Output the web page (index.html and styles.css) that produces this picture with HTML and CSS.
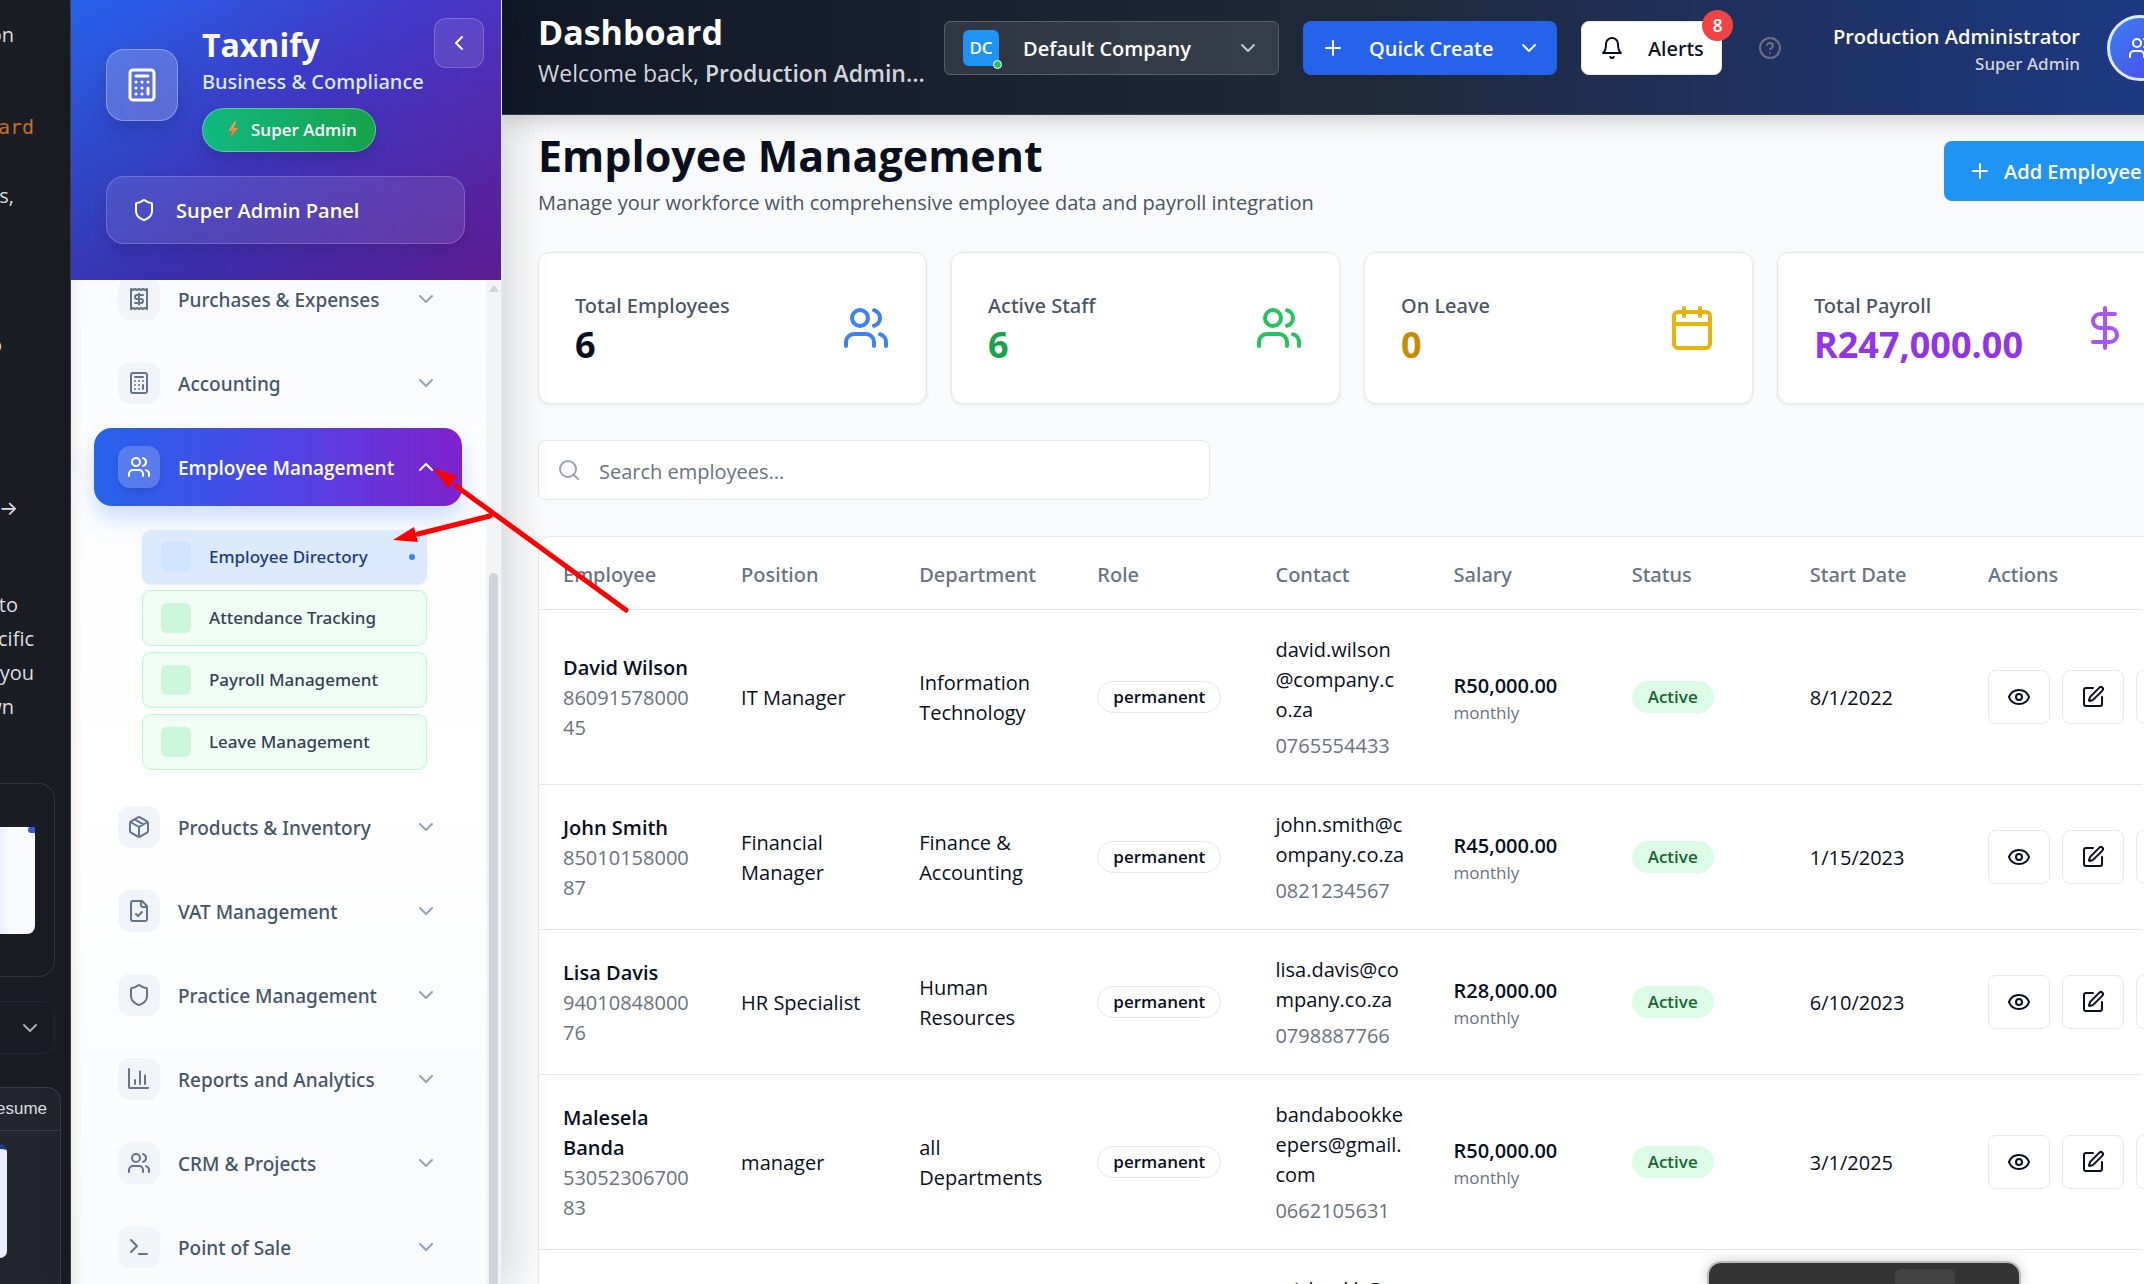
FILE: index.html
```html
<!DOCTYPE html>
<html lang="en">
<head>
<meta charset="utf-8">
<title>Taxnify - Employee Management</title>
<link rel="stylesheet" href="styles.css">
</head>
<body>
<svg class="sprite" aria-hidden="true">
  <symbol id="calculator" viewBox="0 0 24 24"><rect width="16" height="20" x="4" y="2" rx="2"/><path d="M8 6h8M16 14v4M16 10h.01M12 10h.01M8 10h.01M12 14h.01M8 14h.01M12 18h.01M8 18h.01"/></symbol>
  <symbol id="chevron-down" viewBox="0 0 24 24"><path d="m6 9 6 6 6-6"/></symbol>
  <symbol id="chevron-up" viewBox="0 0 24 24"><path d="m18 15-6-6-6 6"/></symbol>
  <symbol id="chevron-left" viewBox="0 0 24 24"><path d="m15 18-6-6 6-6"/></symbol>
  <symbol id="shield" viewBox="0 0 24 24"><path d="M20 13c0 5-3.500 7.500-7.660 8.950a1 1 0 0 1-.67-.01C7.500 20.500 4 18 4 13V6a1 1 0 0 1 1-1c2 0 4.500-1.200 6.240-2.720a1.170 1.170 0 0 1 1.520 0C14.510 3.810 17 5 19 5a1 1 0 0 1 1 1z"/></symbol>
  <symbol id="receipt" viewBox="0 0 24 24"><path d="M4 2v20l2-1 2 1 2-1 2 1 2-1 2 1 2-1 2 1V2l-2 1-2-1-2 1-2-1-2 1-2-1-2 1Z"/><path d="M16 8h-6a2 2 0 1 0 0 4h4a2 2 0 1 1 0 4H8M12 17.500v-11"/></symbol>
  <symbol id="users" viewBox="0 0 24 24"><path d="M16 21v-2a4 4 0 0 0-4-4H6a4 4 0 0 0-4 4v2"/><circle cx="9" cy="7" r="4"/><path d="M22 21v-2a4 4 0 0 0-3-3.870M16 3.130a4 4 0 0 1 0 7.750"/></symbol>
  <symbol id="package" viewBox="0 0 24 24"><path d="M11 21.730a2 2 0 0 0 2 0l7-4A2 2 0 0 0 21 16V8a2 2 0 0 0-1-1.730l-7-4a2 2 0 0 0-2 0l-7 4A2 2 0 0 0 3 8v8a2 2 0 0 0 1 1.730zM12 22V12M3.300 7 12 12l8.700-5M7.500 4.270l9 5.150"/></symbol>
  <symbol id="file-check" viewBox="0 0 24 24"><path d="M15 2H6a2 2 0 0 0-2 2v16a2 2 0 0 0 2 2h12a2 2 0 0 0 2-2V7Z"/><path d="M14 2v4a2 2 0 0 0 2 2h4M9 15l2 2 4-4"/></symbol>
  <symbol id="chart" viewBox="0 0 24 24"><path d="M2 2v18a1 1 0 0 0 1 1h18M8 17v-4M13 17V4.500M18 17V8.500"/></symbol>
  <symbol id="terminal" viewBox="0 0 24 24"><path d="m4 17 6-6-6-6M12 19h8"/></symbol>
  <symbol id="plus" viewBox="0 0 24 24"><path d="M5 12h14M12 5v14"/></symbol>
  <symbol id="bell" viewBox="0 0 24 24"><path d="M6 8a6 6 0 0 1 12 0c0 7 3 9 3 9H3s3-2 3-9M10.300 21a1.940 1.940 0 0 0 3.400 0"/></symbol>
  <symbol id="help" viewBox="0 0 24 24"><circle cx="12" cy="12" r="10"/><path d="M9.090 9a3 3 0 0 1 5.830 1c0 2-3 3-3 3M12 17h.01"/></symbol>
  <symbol id="calendar" viewBox="0 0 24 24"><path d="M8 2v4M16 2v4M3 10h18"/><rect width="18" height="18" x="3" y="4" rx="2"/></symbol>
  <symbol id="dollar" viewBox="0 0 24 24"><path d="M12 2v20M17 5H9.500a3.500 3.500 0 0 0 0 7h5a3.500 3.500 0 0 1 0 7H6"/></symbol>
  <symbol id="search" viewBox="0 0 24 24"><circle cx="11" cy="11" r="8"/><path d="m21 21-4.300-4.300"/></symbol>
  <symbol id="eye" viewBox="0 0 24 24"><path d="M2.060 12.350a1 1 0 0 1 0-.7 10.750 10.750 0 0 1 19.880 0 1 1 0 0 1 0 .7 10.750 10.750 0 0 1-19.880 0"/><circle cx="12" cy="12" r="3"/></symbol>
  <symbol id="edit" viewBox="0 0 24 24"><path d="M12 3H5a2 2 0 0 0-2 2v14a2 2 0 0 0 2 2h14a2 2 0 0 0 2-2v-7"/><path d="M18.380 2.620a1 1 0 0 1 3 3l-9.010 9.010a2 2 0 0 1-.85.510l-2.870.840a.5.5 0 0 1-.62-.62l.84-2.870a2 2 0 0 1 .510-.85z"/></symbol>
  <symbol id="trash" viewBox="0 0 24 24"><path d="M3 6h18M19 6v14a2 2 0 0 1-2 2H7a2 2 0 0 1-2-2V6M8 6V4a2 2 0 0 1 2-2h4a2 2 0 0 1 2 2v2"/></symbol>
</svg>

<div class="app">
  <aside class="chat">
    <div class="chat-text">
      <p class="line short">on</p>
      <p class="line code">ard</p>
      <p class="line short gap-m">s,</p>
      <p class="line edge">o</p>
      <p class="line mid gap-l">→</p>
      <p class="line mid gap-xl">to</p>
      <p class="line">cific</p>
      <p class="line">you</p>
      <p class="line short">wn</p>
    </div>
    <div class="chat-card"><div class="shot"><i></i></div></div>
    <div class="chat-pick"><svg class="icon"><use href="#chevron-down"/></svg></div>
    <div class="chat-panel">
      <p class="chat-head">esume</p>
      <div class="shot blue"></div>
    </div>
  </aside>

  <aside class="sidebar">
    <header class="brand">
      <div class="brand-row">
        <span class="logo"><svg class="icon big"><use href="#calculator"/></svg></span>
        <div class="brand-text">
          <strong class="brand-name">Taxnify</strong>
          <span class="brand-sub">Business &amp; Compliance</span>
          <span class="role"><svg class="bolt" viewBox="0 0 12 18"><defs><linearGradient id="boltfill" x1="0" y1="0" x2="0" y2="1"><stop offset="0" stop-color="#fbb040"/><stop offset="1" stop-color="#f4564a"/></linearGradient></defs><path fill="url(#boltfill)" d="M8 0 1 10h4l-2 8 8-11H7l2-7z"/></svg>Super Admin</span>
        </div>
        <button class="collapse" aria-label="Collapse sidebar"><svg class="icon"><use href="#chevron-left"/></svg></button>
      </div>
      <button class="panel-button"><svg class="icon"><use href="#shield"/></svg><span>Super Admin Panel</span></button>
    </header>
    <div class="nav-area">
      <nav class="nav">
        <a class="item" href="#"><span class="tile"><svg class="icon"><use href="#receipt"/></svg></span><span class="label">Purchases &amp; Expenses</span><svg class="icon chev"><use href="#chevron-down"/></svg></a>
        <a class="item" href="#"><span class="tile"><svg class="icon"><use href="#calculator"/></svg></span><span class="label">Accounting</span><svg class="icon chev"><use href="#chevron-down"/></svg></a>
        <a class="item active" href="#"><span class="tile"><svg class="icon"><use href="#users"/></svg></span><span class="label">Employee Management</span><svg class="icon chev"><use href="#chevron-up"/></svg></a>
        <div class="sub">
          <a class="sub-item current" href="#"><i></i><span>Employee Directory</span><b></b></a>
          <a class="sub-item" href="#"><i></i><span>Attendance Tracking</span></a>
          <a class="sub-item" href="#"><i></i><span>Payroll Management</span></a>
          <a class="sub-item" href="#"><i></i><span>Leave Management</span></a>
        </div>
        <a class="item" href="#"><span class="tile"><svg class="icon"><use href="#package"/></svg></span><span class="label">Products &amp; Inventory</span><svg class="icon chev"><use href="#chevron-down"/></svg></a>
        <a class="item" href="#"><span class="tile"><svg class="icon"><use href="#file-check"/></svg></span><span class="label">VAT Management</span><svg class="icon chev"><use href="#chevron-down"/></svg></a>
        <a class="item" href="#"><span class="tile"><svg class="icon"><use href="#shield"/></svg></span><span class="label">Practice Management</span><svg class="icon chev"><use href="#chevron-down"/></svg></a>
        <a class="item" href="#"><span class="tile"><svg class="icon"><use href="#chart"/></svg></span><span class="label">Reports and Analytics</span><svg class="icon chev"><use href="#chevron-down"/></svg></a>
        <a class="item" href="#"><span class="tile"><svg class="icon"><use href="#users"/></svg></span><span class="label">CRM &amp; Projects</span><svg class="icon chev"><use href="#chevron-down"/></svg></a>
        <a class="item" href="#"><span class="tile"><svg class="icon"><use href="#terminal"/></svg></span><span class="label">Point of Sale</span><svg class="icon chev"><use href="#chevron-down"/></svg></a>
      </nav>
      <div class="scroll"><span class="scroll-up"></span><span class="thumb"></span></div>
    </div>
  </aside>

  <div class="main">
    <header class="topbar">
      <div class="greeting">
        <h2>Dashboard</h2>
        <p>Welcome back, <b>Production Admin...</b></p>
      </div>
      <div class="company">
        <span class="company-badge">DC<i></i></span>
        <select aria-label="Company"><option>Default Company</option></select>
        <svg class="icon"><use href="#chevron-down"/></svg>
      </div>
      <button class="create"><svg class="icon"><use href="#plus"/></svg><span>Quick Create</span><svg class="icon"><use href="#chevron-down"/></svg></button>
      <button class="alerts"><svg class="icon"><use href="#bell"/></svg><span>Alerts</span><span class="count">8</span></button>
      <button class="help" aria-label="Help"><svg class="icon"><use href="#help"/></svg></button>
      <div class="user"><strong>Production Administrator</strong><span>Super Admin</span></div>
      <button class="avatar" aria-label="Account"><svg class="icon"><use href="#users"/></svg></button>
    </header>

    <main class="content">
      <div class="page-head">
        <div>
          <h1>Employee Management</h1>
          <p>Manage your workforce with comprehensive employee data and payroll integration</p>
        </div>
        <button class="add"><svg class="icon"><use href="#plus"/></svg><span>Add Employee</span></button>
      </div>

      <section class="stats">
        <div class="stat"><div><p>Total Employees</p><strong>6</strong></div><svg class="icon huge c-blue"><use href="#users"/></svg></div>
        <div class="stat"><div><p>Active Staff</p><strong class="t-green">6</strong></div><svg class="icon huge c-green"><use href="#users"/></svg></div>
        <div class="stat"><div><p>On Leave</p><strong class="t-yellow">0</strong></div><svg class="icon huge c-yellow"><use href="#calendar"/></svg></div>
        <div class="stat"><div><p>Total Payroll</p><strong class="t-purple">R247,000.00</strong></div><svg class="icon huge c-purple"><use href="#dollar"/></svg></div>
      </section>

      <label class="search"><svg class="icon"><use href="#search"/></svg><input type="text" placeholder="Search employees..." aria-label="Search employees"></label>

      <div class="table-card">
        <table>
          <thead><tr><th>Employee</th><th>Position</th><th>Department</th><th>Role</th><th>Contact</th><th>Salary</th><th>Status</th><th>Start Date</th><th>Actions</th></tr></thead>
          <tbody>
            <tr>
              <td><strong>David Wilson</strong><div class="muted">86091578000<br>45</div></td><td>IT Manager</td><td>Information Technology</td><td class="control"><span class="pill">permanent</span></td>
              <td><div>david.wilson<br>@company.c<br>o.za</div><div class="muted phone">0765554433</div></td>
              <td><strong>R50,000.00</strong><div class="small">monthly</div></td><td class="control"><span class="pill ok">Active</span></td><td>8/1/2022</td>
              <td class="control"><div class="actions"><button aria-label="View"><svg class="icon"><use href="#eye"/></svg></button><button aria-label="Edit"><svg class="icon"><use href="#edit"/></svg></button><button aria-label="Delete"><svg class="icon"><use href="#trash"/></svg></button></div></td>
            </tr>
            <tr>
              <td><strong>John Smith</strong><div class="muted">85010158000<br>87</div></td><td>Financial Manager</td><td>Finance &amp; Accounting</td><td class="control"><span class="pill">permanent</span></td>
              <td><div>john.smith@c<br>ompany.co.za</div><div class="muted phone">0821234567</div></td>
              <td><strong>R45,000.00</strong><div class="small">monthly</div></td><td class="control"><span class="pill ok">Active</span></td><td>1/15/2023</td>
              <td class="control"><div class="actions"><button aria-label="View"><svg class="icon"><use href="#eye"/></svg></button><button aria-label="Edit"><svg class="icon"><use href="#edit"/></svg></button><button aria-label="Delete"><svg class="icon"><use href="#trash"/></svg></button></div></td>
            </tr>
            <tr>
              <td><strong>Lisa Davis</strong><div class="muted">94010848000<br>76</div></td><td>HR Specialist</td><td>Human Resources</td><td class="control"><span class="pill">permanent</span></td>
              <td><div>lisa.davis@co<br>mpany.co.za</div><div class="muted phone">0798887766</div></td>
              <td><strong>R28,000.00</strong><div class="small">monthly</div></td><td class="control"><span class="pill ok">Active</span></td><td>6/10/2023</td>
              <td class="control"><div class="actions"><button aria-label="View"><svg class="icon"><use href="#eye"/></svg></button><button aria-label="Edit"><svg class="icon"><use href="#edit"/></svg></button><button aria-label="Delete"><svg class="icon"><use href="#trash"/></svg></button></div></td>
            </tr>
            <tr>
              <td><strong>Malesela Banda</strong><div class="muted">53052306700<br>83</div></td><td>manager</td><td>all Departments</td><td class="control"><span class="pill">permanent</span></td>
              <td><div>bandabookke<br>epers@gmail.<br>com</div><div class="muted phone">0662105631</div></td>
              <td><strong>R50,000.00</strong><div class="small">monthly</div></td><td class="control"><span class="pill ok">Active</span></td><td>3/1/2025</td>
              <td class="control"><div class="actions"><button aria-label="View"><svg class="icon"><use href="#eye"/></svg></button><button aria-label="Edit"><svg class="icon"><use href="#edit"/></svg></button><button aria-label="Delete"><svg class="icon"><use href="#trash"/></svg></button></div></td>
            </tr>
            <tr>
              <td></td><td></td><td></td><td></td>
              <td><div>michael.b@c<br>ompany.co.za</div><div class="muted phone">0731234567</div></td>
              <td></td><td></td><td></td><td></td>
            </tr>
          </tbody>
        </table>
      </div>
    </main>
  </div>
</div>

<svg class="arrows" viewBox="0 0 240 150" aria-hidden="true">
  <path class="shaft" d="M236 145 L66 21M100 51 L28 69"/>
  <path class="head" d="M43 3 67 11 58 23zM3 75 24 62 28 77z"/>
</svg>
<div class="float-bar"><i></i></div>
</body>
</html>
```

FILE: styles.css
```css
* { box-sizing: border-box; }
body {
  margin: 0;
  height: 100vh;
  overflow: hidden;
  font-family: "Open Sans", "Noto Sans", sans-serif;
  font-size: 20px;
  line-height: 30px;
  color: #0a0f1e;
  background: #f9fafb;
}
h1, h2, p { margin: 0; }
button, input, select { font: inherit; color: inherit; border: 0; margin: 0; }
button { display: flex; align-items: center; padding: 0; }
button span { padding-top: 2px; }
a { color: inherit; text-decoration: none; }
.sprite { position: absolute; width: 0; height: 0; }
.icon {
  width: 24px;
  height: 24px;
  flex: none;
  fill: none;
  stroke: currentColor;
  stroke-width: 2;
  stroke-linecap: round;
  stroke-linejoin: round;
}
.icon.big { width: 36px; height: 36px; }
.icon.huge { width: 48px; height: 48px; }

.app { display: flex; height: 100vh; overflow: hidden; }

/* chat window behind the application */
.chat {
  flex: none;
  width: 71px;
  overflow: hidden;
  background: #1a1d24;
  border-right: 1px solid #3f424c;
  color: #dcdde1;
}
.chat-text { height: 783px; padding-top: 18px; }
.line {
  display: flex;
  justify-content: flex-end;
  padding-right: 36px;
  line-height: 34px;
}
.line.short { padding-right: 56px; }
.line.mid { padding-right: 52px; }
.line.edge { padding-right: 68px; margin-top: 115px; }
.line.code {
  margin-top: 58px;
  color: #c56f1c;
  font-family: "DejaVu Sans Mono", monospace;
}
.gap-m { margin-top: 35px; }
.gap-l { margin-top: 129px; font-family: Inter, "DejaVu Sans", sans-serif; }
.gap-xl { margin-top: 63px; }
.chat-card {
  width: 55px;
  height: 194px;
  padding: 43px 19px 0 0;
  border: 1px solid #2c3836;
  border-left: 0;
  border-radius: 0 16px 16px 0;
}
.shot {
  height: 107px;
  border-radius: 0 8px 8px 0;
  background: linear-gradient(90deg, #eef0fc, #f9fafd 30%);
}
.shot i { display: block; width: 7px; height: 6px; margin-left: auto; background: #2b5ce0; border-radius: 3px 0 0 3px; }
.chat-pick {
  display: flex;
  justify-content: flex-end;
  align-items: center;
  width: 55px;
  height: 53px;
  margin: 24px 0 33px;
  padding-right: 12px;
  border: 1px solid #252833;
  border-left: 0;
  border-radius: 0 12px 12px 0;
  color: #a9abb3;
}
.chat-panel {
  width: 61px;
  height: 260px;
  background: #23262f;
  border: 1px solid #3a3d48;
  border-left: 0;
  border-radius: 0 14px 0 0;
}
.chat-head {
  display: flex;
  justify-content: flex-end;
  padding: 0 13px 0 0;
  margin-bottom: 13px;
  font-family: "Liberation Sans", sans-serif;
  font-size: 17px;
  line-height: 42px;
  border-bottom: 1px solid #3a3d48;
}
.shot.blue { width: 7px; height: 114px; background: #e9eefe; border-top: 5px solid #20398a; }

/* sidebar */
.sidebar {
  position: relative;
  z-index: 2;
  display: flex;
  flex-direction: column;
  flex: none;
  width: 431px;
  border-right: 1px solid #e2e8f0;
  box-shadow: 8px 0 40px rgba(0, 0, 0, .15);
}
.brand {
  flex: none;
  height: 280px;
  padding: 22px 36px 35px 35px;
  color: #fff;
  background:
    linear-gradient(0deg, rgba(0, 0, 0, .14), rgba(0, 0, 0, 0)),
    linear-gradient(135deg, #2563eb, #4338ca 50%, #6b21a8);
}
.brand-row { display: flex; align-items: flex-start; }
.logo {
  display: flex;
  align-items: center;
  justify-content: center;
  width: 72px;
  height: 72px;
  margin: 27px 24px 0 0;
  border: 1px solid rgba(255, 255, 255, .3);
  border-radius: 18px;
  background: rgba(255, 255, 255, .2);
  box-shadow: 0 10px 15px rgba(0, 0, 0, .1);
}
.brand-text { display: flex; flex-direction: column; align-items: flex-start; flex: 1; }
.brand-name { font-size: 32px; line-height: 45px; }
.brand-sub {
  color: #dbeafe;
  font-family: "Noto Sans", "Open Sans", sans-serif;
  font-weight: 500;
  line-height: 30px;
  white-space: nowrap;
}
.role {
  display: flex;
  align-items: center;
  gap: 12px;
  height: 44px;
  margin: 11px 0 24px;
  padding: 0 18px 0 24px;
  border: 1px solid rgba(255, 255, 255, .3);
  border-radius: 22px;
  background: linear-gradient(90deg, #10b981, #16a34a);
  box-shadow: 0 8px 14px rgba(0, 0, 0, .12);
  font-size: 17px;
  font-weight: 600;
  white-space: nowrap;
}
.bolt { width: 12px; height: 18px; }
.collapse {
  position: absolute;
  top: 18px;
  right: 17px;
  justify-content: center;
  width: 50px;
  height: 50px;
  border: 1px solid rgba(255, 255, 255, .2);
  border-radius: 12px;
  background: rgba(255, 255, 255, .1);
}
.panel-button {
  gap: 20px;
  width: 100%;
  height: 68px;
  padding: 0 25px;
  border: 1px solid rgba(255, 255, 255, .2);
  border-radius: 18px;
  background: rgba(255, 255, 255, .1);
  box-shadow: 0 8px 14px rgba(0, 0, 0, .1);
  font-weight: 600;
}
.nav-area {
  display: flex;
  flex: 1;
  overflow: hidden;
  background:
    linear-gradient(90deg, rgba(60, 20, 20, .06), rgba(0, 0, 0, 0) 12px),
    linear-gradient(180deg, #fafbfe, #fff 50%, #f8fafc);
}
.nav {
  display: flex;
  flex-direction: column;
  gap: 6px;
  flex: 1;
  min-width: 0;
  margin-top: -20px;
  padding: 0 24px 0 23px;
}
.item {
  display: flex;
  align-items: center;
  gap: 18px;
  flex: none;
  height: 78px;
  padding: 0 24px;
  border-radius: 18px;
  color: #475569;
  font-family: "Noto Sans", "Open Sans", sans-serif;
  font-size: 19px;
  font-weight: 500;
  white-space: nowrap;
}
.label { padding-top: 2px; }
.tile {
  display: flex;
  align-items: center;
  justify-content: center;
  flex: none;
  width: 42px;
  height: 42px;
  border-radius: 12px;
  background: #f1f5f9;
  color: #64748b;
}
.chev { margin-left: auto; color: #94a3b8; }
.active {
  color: #fff;
  font-family: inherit;
  font-weight: 600;
  background: linear-gradient(90deg, #2563eb, #4f46e5 50%, #7e22ce);
  box-shadow: 0 12px 22px rgba(59, 130, 246, .25);
}
.active .tile { background: rgba(255, 255, 255, .2); color: #fff; box-shadow: 0 4px 6px rgba(0, 0, 0, .1); }
.active .chev { color: #fff; }
.sub {
  display: flex;
  flex-direction: column;
  gap: 6px;
  margin: 18px 35px 12px 48px;
}
.sub-item {
  display: flex;
  align-items: center;
  gap: 18px;
  height: 56px;
  padding: 0 18px;
  border: 1px solid #bbf7d0;
  border-radius: 9px;
  background: #f0fdf4;
  color: #334155;
  font-family: "Noto Sans", "Open Sans", sans-serif;
  font-size: 17px;
  font-weight: 500;
  white-space: nowrap;
}
.sub-item i { flex: none; width: 30px; height: 30px; border-radius: 6px; background: #ccf7da; }
.sub-item.current { height: 54px; border-color: #dbeafe; background: #dbeafe; color: #1e3a8a; box-shadow: 0 1px 2px rgba(0, 0, 0, .08); }
.sub-item.current i { background: #cfe4ff; }
.current b { width: 6px; height: 6px; margin: 0 -7px 0 auto; border-radius: 50%; background: #3b82f6; }
.scroll {
  display: flex;
  flex-direction: column;
  align-items: center;
  flex: none;
  width: 15px;
  padding-top: 5px;
  background: #f3f4f6;
}
.scroll-up { border: 5px solid transparent; border-top: 0; border-bottom: 7px solid #d1d5db; }
.thumb { flex: 1; width: 9px; margin-top: 281px; border-radius: 5px 5px 0 0; background: #d1d5db; }

/* top bar */
.main { flex: 1; min-width: 0; margin-right: -58px; }
.topbar {
  position: relative;
  display: flex;
  align-items: flex-start;
  height: 115px;
  padding: 21px 29px 0 36px;
  border-bottom: 1px solid #374151;
  background: linear-gradient(90deg, #111827, #1f2937 50%, #1e3a8a);
  box-shadow: 0 6px 22px rgba(0, 0, 0, .18);
  color: #fff;
  white-space: nowrap;
}
.greeting { flex: 1; margin-top: -13px; overflow: hidden; }
.greeting h2 { font-size: 34px; line-height: 48px; }
.greeting p { font-size: 23px; line-height: 34px; color: #d1d5db; }
.greeting b { font-weight: 600; }
.company {
  display: flex;
  align-items: center;
  width: 335px;
  height: 54px;
  margin-right: 24px;
  padding: 0 18px;
  border: 1px solid #565e6c;
  border-radius: 6px;
  background: rgba(255, 255, 255, .1);
}
.company-badge {
  position: relative;
  width: 36px;
  height: 36px;
  margin-right: 20px;
  border-radius: 6px;
  background: #2094f3;
  text-align: center;
  font-size: 17px;
  line-height: 36px;
  font-weight: 600;
}
.company-badge i {
  position: absolute;
  right: -3px;
  bottom: -3px;
  width: 9px;
  height: 9px;
  border: 1px solid #fff;
  border-radius: 50%;
  background: #22c55e;
}
.company select { flex: 1; padding: 2px 0 0 4px; appearance: none; background: none; font-weight: 600; }
.company .icon { color: #c3c7ce; }
.create {
  gap: 24px;
  width: 254px;
  height: 54px;
  margin-right: 24px;
  padding: 0 18px;
  border-radius: 8px;
  background: #2563eb;
  color: #fff;
  font-weight: 600;
}
.create span { flex: 1; text-align: left; }
.create .icon:last-child { margin-right: -2px; }
.alerts {
  position: relative;
  gap: 24px;
  width: 141px;
  height: 54px;
  margin-right: 36px;
  padding: 0 18px;
  border: 1px solid #e5e7eb;
  border-radius: 8px;
  background: #fff;
  color: #0a0f1e;
  font-family: "Noto Sans", "Open Sans", sans-serif;
  font-weight: 500;
}
.alerts .count {
  position: absolute;
  top: -12px;
  right: -12px;
  width: 31px;
  height: 31px;
  padding: 0;
  border-radius: 50%;
  background: #ef4444;
  color: #fff;
  font-size: 17px;
  font-weight: 600;
  line-height: 31px;
}
.help { height: 54px; background: none; color: #6b7280; }
.user {
  display: flex;
  flex-direction: column;
  align-items: flex-end;
  width: 298px;
  margin-right: 27px;
  padding-top: 2px;
  line-height: 28px;
}
.user strong { font-weight: 600; }
.user span { color: #d1d5db; font-family: "Noto Sans", "Open Sans", sans-serif; font-size: 17px; font-weight: 500; line-height: 26px; }
.avatar {
  justify-content: center;
  width: 66px;
  height: 66px;
  margin-top: -6px;
  border: 3px solid #dbeafe;
  border-radius: 50%;
  background: linear-gradient(135deg, #3b82f6, #4f46e5);
  color: #fff;
}

/* page */
.content { padding: 0 36px; }
.page-head { display: flex; justify-content: space-between; padding-top: 14px; }
.page-head h1 { font-size: 43px; line-height: 54px; }
.page-head p { line-height: 40px; color: #4b5563; }
.add {
  gap: 12px;
  width: 222px;
  height: 60px;
  margin-top: 12px;
  padding-left: 24px;
  border-radius: 8px;
  background: #2094f3;
  color: #fff;
  font-weight: 600;
  white-space: nowrap;
}
.stats { display: grid; grid-template-columns: repeat(4, 1fr); gap: 24px; margin-top: 29px; }
.stat {
  display: flex;
  align-items: center;
  justify-content: space-between;
  height: 152px;
  padding: 0 36px;
  border: 1px solid #e5e7eb;
  border-radius: 12px;
  background: #fff;
  box-shadow: 0 1px 3px rgba(0, 0, 0, .07);
}
.stat p { padding-top: 3px; color: #4b5563; font-family: "Noto Sans", "Open Sans", sans-serif; font-weight: 500; }
.stat strong { display: block; font-size: 36px; line-height: 48px; }
.stat .t-green { color: #16a34a; }
.stat .t-yellow { color: #ca8a04; }
.stat .t-purple { color: #9333ea; }
.c-blue { color: #3b82f6; }
.c-green { color: #22c55e; }
.c-yellow { color: #eab308; }
.c-purple { color: #a855f7; }
.search {
  display: flex;
  align-items: center;
  gap: 18px;
  width: 672px;
  height: 60px;
  margin: 36px 0;
  padding: 0 18px;
  border: 1px solid #e5e7eb;
  border-radius: 8px;
  background: #fff;
  color: #9ca3af;
}
.search input { flex: 1; padding: 3px 0 0; background: none; outline: 0; color: #111827; }
.search input::placeholder { color: #6b7280; opacity: 1; }
.table-card {
  padding-right: 23px;
  border: 1px solid #e5e7eb;
  border-radius: 12px;
  background: #fff;
}
table { width: 100%; table-layout: fixed; border-collapse: collapse; }
th, td { padding: 25px 24px 23px; text-align: left; border-bottom: 1px solid #e5e7eb; white-space: normal; }
.control { padding: 24px; }
th {
  height: 72px;
  padding: 4px 24px 0;
  color: #6b7280;
  font-family: "Noto Sans", "Open Sans", sans-serif;
  font-weight: 500;
  white-space: nowrap;
}
td strong { font-weight: 600; }
td > strong { display: block; }
.muted { color: #6b7280; }
.phone { margin-top: 6px; }
.small { color: #6b7280; font-size: 17px; line-height: 24px; }
.pill {
  display: inline-block;
  padding: 0 15px;
  border: 1px solid #e5e7eb;
  border-radius: 16px;
  font-size: 17px;
  line-height: 30px;
  font-weight: 600;
}
.pill.ok { border-color: #dcfce7; background: #dcfce7; color: #166534; }
.actions { display: flex; gap: 12px; }
.actions button {
  justify-content: center;
  flex: none;
  width: 62px;
  height: 54px;
  border: 1px solid #e5e7eb;
  border-radius: 8px;
  background: #fff;
}

/* annotation and floating toolbar drawn over everything */
.arrows { position: absolute; z-index: 5; left: 390px; top: 465px; width: 240px; height: 150px; }
.shaft { fill: none; stroke: #f00; stroke-width: 5; stroke-linecap: round; }
.head { fill: #f00; }
.float-bar {
  position: absolute;
  z-index: 6;
  right: 123px;
  bottom: 0;
  width: 314px;
  height: 23px;
  padding: 6px 0 0 186px;
  border: 2px solid #bbb;
  border-bottom: 0;
  border-radius: 14px 14px 0 0;
  background: #343434;
  box-shadow: 0 0 14px rgba(0, 0, 0, .2);
}
.float-bar i { display: block; width: 60px; height: 15px; border-radius: 6px 6px 0 0; background: #424242; }
```
